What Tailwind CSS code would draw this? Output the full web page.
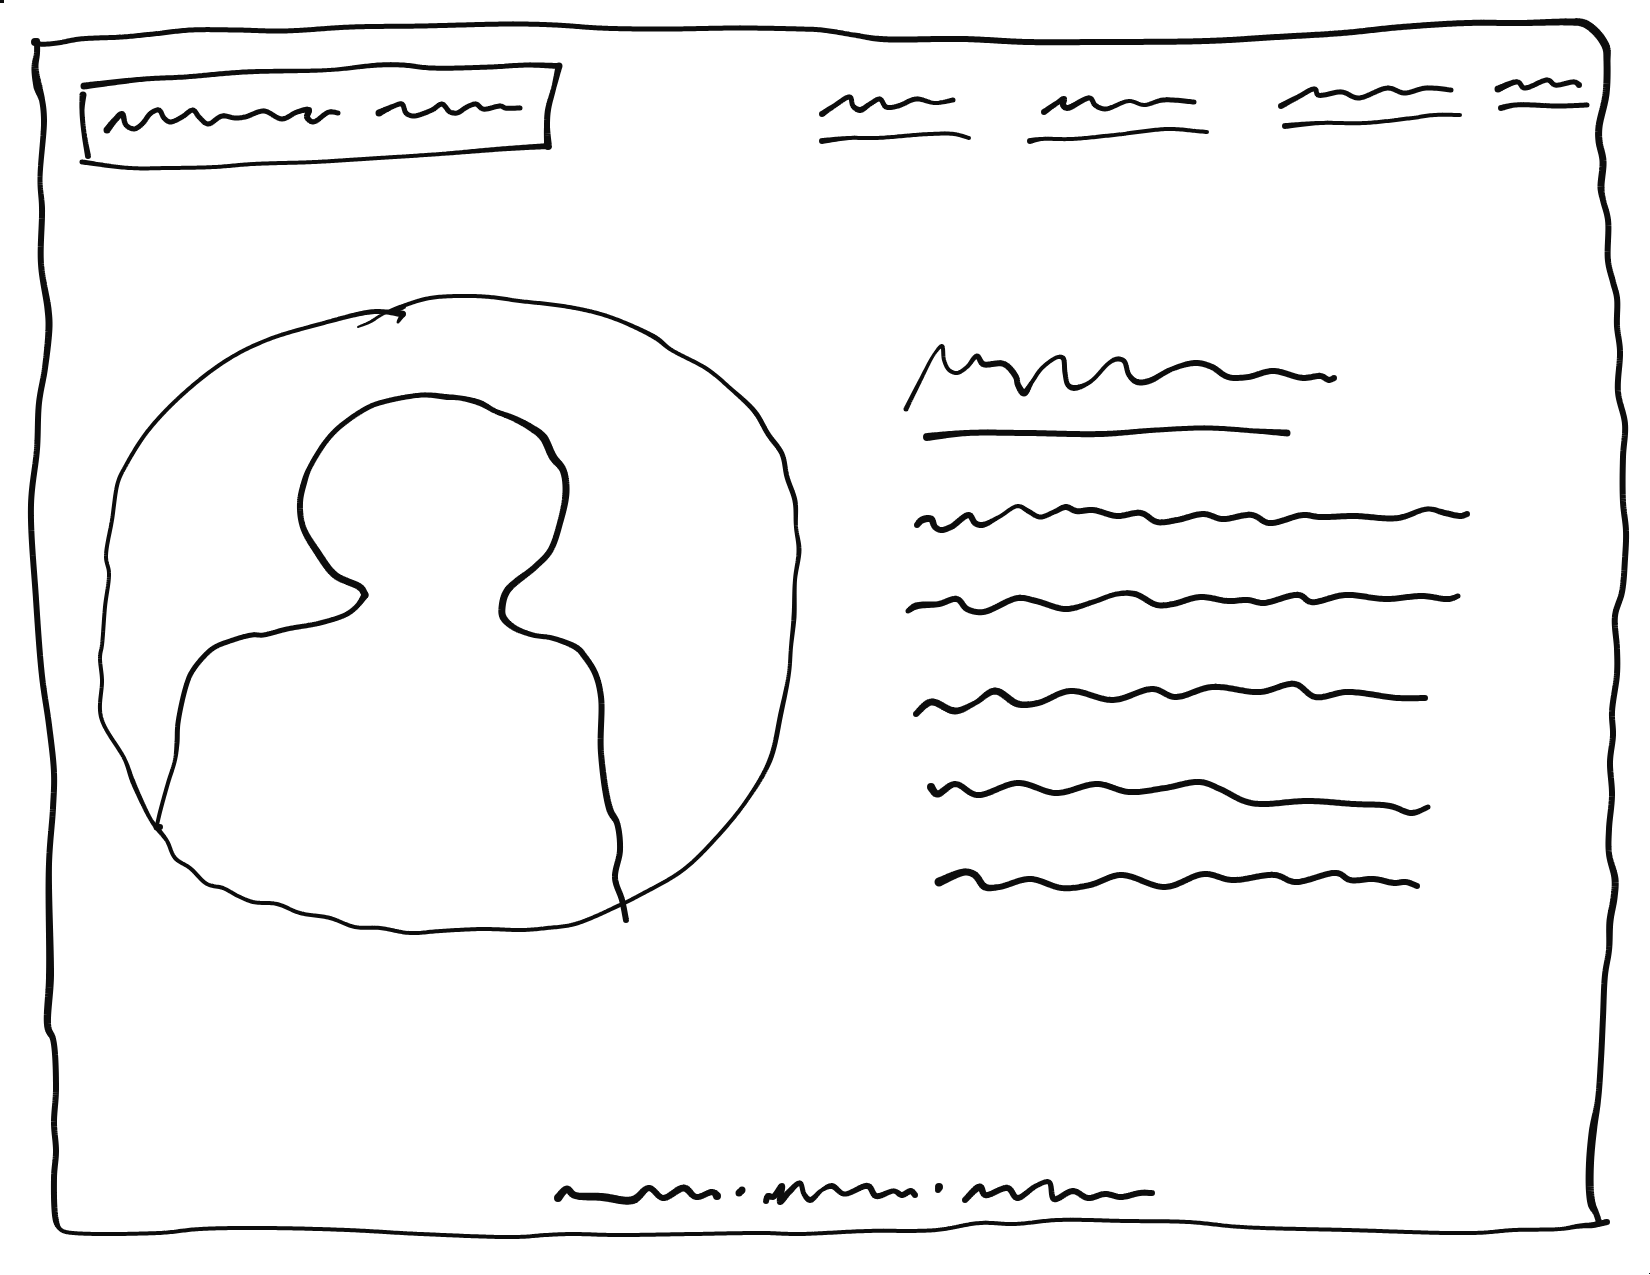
<!DOCTYPE html>
<html lang="en">
<head>
<meta charset="utf-8">
<meta name="viewport" content="width=device-width, initial-scale=1">
<title>Profile page wireframe</title>
<script src="https://cdn.jsdelivr.net/npm/@tailwindcss/browser@4"></script>
</head>
<body class="bg-white font-['Liberation_Sans',sans-serif]">
<div class="relative flex min-h-screen flex-col overflow-hidden fill-[#0d0d0d]">

  <!-- Hand-drawn page frame, stretched to the page -->
  <svg class="pointer-events-none absolute inset-0 h-full w-full" viewBox="0 0 1650 1275" preserveAspectRatio="none" aria-hidden="true">
    <rect x="0" y="0" width="4" height="3"/>
    <rect x="1649" y="1273" width="1" height="1"/>
    <path data-pen="35,42,8 40,44,5 57,43 80,39 122,37 153,34 191,30 237,30 283,31 352,27 421,26 513,24 555,25 600,28 640,29 673,29 740,28 800,29 822,30 854,35 881,39,6 963,39 1028,42 1098,42 1206,41 1277,37 1342,33 1402,27 1467,23 1521,23 1570,22,7 1583,23,8 1595,31 1606,47 1607,61,7 1606,94 1599,127 1599,141 1603,161 1601,188 1603,200,6 1608,220 1608,261 1613,282 1617,298 1617,326 1620,351 1618,392 1625,424 1623,457 1623,502 1626,531 1625,559 1622,592 1615,616 1617,649 1617,674 1612,712 1613,735 1610,762 1612,795 1609,829 1609,854 1615,879,7 1614,898 1610,921 1609,950,6 1605,975 1603,1017 1601,1059 1598,1100 1593,1130,8 1590,1163 1590,1192 1592,1205 1596,1213,6 1599,1222"/>
    <path data-pen="37,41,6 37,53 35,67,7 38,87,9 42,100,6 44,120 40,180,5 42,208,6 41,264 48,309,7 49,327 45,368,6 39,403 37,449 31,505 36,599 42,676 49,725 54,773 53,808 49,864 50,976,8 48,1028,7 53,1039,6 56,1088 54,1123 56,1151 54,1178 56,1221 60,1229,4 66,1232,4 158,1233 200,1229 263,1228 347,1230 421,1234 516,1237 546,1235 572,1234 615,1235 693,1234 763,1233 798,1234 867,1231 936,1230 980,1223 1014,1224 1058,1220 1127,1221 1188,1222 1242,1227 1347,1230 1473,1233 1515,1230 1560,1229 1580,1226,5 1593,1225,6 1607,1222"/>
  </svg>

  <header class="flex items-start justify-between pt-[60px] pr-[60px] pl-[76px]">
    <a href="#" aria-label="Home" class="block">
      <svg class="h-[112px] w-[488px] overflow-visible" viewBox="76 60 488 112" aria-hidden="true">
        <path data-pen="84,86,7 145,79,5 184,77 245,72 329,70,4 379,65,5 402,65 432,68 490,67 528,65 559,66,6"/>
        <path data-pen="559,66,7 554,87,5 548,110,6 547,127 548,146,8"/>
        <path data-pen="548,146,6 501,149,5 440,154,4 363,159 314,162 253,164 214,167 168,168 130,168 82,162,5"/>
        <path data-pen="83,95,7 82,110,5 84,133 88,156,6"/>
        <path data-pen="107,130,7 115,120,6 122,114 126,125,5 134,129 142,124 151,113 159,110 164,118 170,122 182,117 193,110 199,117 208,124 222,116 235,118 245,117 264,111 282,119 297,112 309,110,6 307,117 313,122,5 329,112 338,113"/>
        <path data-pen="379,113,7 394,106,5 402,104 406,113 413,116 432,110 442,104 450,112 457,113 467,107 476,104 483,109 501,106 505,108 520,108"/>
      </svg>
    </a>
    <nav aria-label="Main" class="flex gap-6 pt-4">
      <a href="#" aria-label="First section" class="block">
        <svg class="h-[72px] w-[180px] overflow-visible" viewBox="816 76 180 72" aria-hidden="true">
          <path data-pen="822,114,6 834,106,5 850,97 853,106 860,110,6 870,104,5 880,99 886,107 898,106 916,99 935,103,4 953,100,5"/>
          <path data-pen="822,141,6 849,138,4 876,138 930,134 954,134 969,138"/>
        </svg>
      </a>
      <a href="#" aria-label="Second section" class="block">
        <svg class="h-[72px] w-[230px] overflow-visible" viewBox="1020 76 230 72" aria-hidden="true">
          <path data-pen="1044,112,6 1057,103,5 1064,99,6 1063,105 1067,108 1090,98,5 1095,105 1105,109 1129,101,4 1144,105 1163,100,5 1194,102"/>
          <path data-pen="1030,141,6 1041,139,4 1071,139 1114,135 1168,129 1196,131 1207,132"/>
        </svg>
      </a>
      <a href="#" aria-label="Third section" class="block">
        <svg class="h-[72px] w-[192px] overflow-visible" viewBox="1274 76 192 72" aria-hidden="true">
          <path data-pen="1281,106,6 1298,97,5 1315,89 1318,95 1342,92 1358,98 1388,88 1404,93 1426,88 1451,90"/>
          <path data-pen="1285,126,6 1320,123,4 1364,123 1412,118 1434,115 1460,115"/>
        </svg>
      </a>
      <a href="#" aria-label="Contact" class="block">
        <svg class="h-[72px] w-[100px] overflow-visible" viewBox="1490 76 100 72" aria-hidden="true">
          <path data-pen="1498,89,7 1518,82,5 1524,88 1548,80 1555,85 1575,82 1579,85,6"/>
          <path data-pen="1501,108,6 1515,105,5 1559,106 1587,105"/>
        </svg>
      </a>
    </nav>
  </header>

  <main class="flex items-start gap-[92px] pt-[116px] pl-[96px]">
    <!-- Portrait placeholder -->
    <svg class="h-[652px] w-[712px] overflow-visible" viewBox="96 288 712 652" role="img" aria-label="Portrait">
      <path data-pen="358,327,2 370,322,3 383,314,3 400,307,4 430,298,4 470,296 490,297 520,301 563,306 597,313 623,322 656,338,5 670,349,4 707,369 730,388 755,412,5 768,434 782,454 787,477 795,501 796,527,4 799,550,5 795,580,4 794,617,5 791,647,4 789,673 781,713,5 770,760 747,800,4 717,837 683,870 640,895 620,905 575,924 547,928 523,930 483,929 440,931 410,933 380,928 355,927 330,918 300,913 277,904 253,902 238,896 223,888 207,884 190,868 175,858 167,841 157,828,5 151,820,4 133,782,5 125,760,4 101,717 102,680 100,657 102,645 105,607 109,573 106,557 112,520 118,482 125,467 147,432 183,394 227,360 267,340 320,324 370,312,5 387,312 402,314,7"/>
      <path data-pen="403,314,6 398,322,3"/>
      <path data-pen="394,311,5 404,307,4"/>
      <path data-pen="157,827,7 160,827,6"/>
      <path data-pen="157,825,4 160,812,4 168,783 175,760 177,743,5 178,723 187,683 193,670 212,649 230,641 252,635 263,635 287,629 320,623 347,614 358,605 365,595,7"/>
      <path data-pen="365,595,7 361,588,7 335,575,7 318,553 303,527,6 300,503 304,483 310,467,5 333,433 367,408 383,402 423,395 447,397,6 460,398,5 480,403,6 495,411,5 513,418,6 530,427,7 543,437,8 553,457 563,470,7 566,492 560,523,6 550,551 535,567 507,591,7 502,608 503,617 513,627,6 533,635,5 552,638 577,648,6 585,657 595,673 601,697 601,753 610,810,7 617,823,6 620,850 615,878 622,900 626,920"/>
    </svg>

    <section aria-label="About" class="flex flex-col pt-12">
      <h1 class="mb-11" aria-label="Heading">
        <svg class="h-[108px] w-[572px] overflow-visible" viewBox="900 336 572 108" aria-hidden="true">
          <path data-pen="906,409,5 919,383,4 935,353,3 942,346,4 944,360,4 949,370 957,373 967,367 977,356,5 983,364,6 1004,364 1016,377 1018,385 1024,393,7 1032,382,4 1042,368 1058,357 1063,358,5 1065,373 1068,385 1074,388,6 1090,382,4 1109,363 1117,359,5 1124,361 1129,375 1137,382,6 1149,381 1172,369,5 1196,363,6 1212,367 1228,377 1248,377 1273,371 1303,378 1321,376 1329,380 1334,378"/>
          <path data-pen="927,437,8 967,433,6 1026,433 1101,434 1157,430,5 1208,428 1256,431 1287,433,7"/>
        </svg>
      </h1>
      <div class="flex flex-col gap-[30px]">
        <svg class="h-[60px] w-[572px] overflow-visible" viewBox="900 488 572 60" aria-hidden="true">
          <path data-pen="917,525,6 922,520,7 931,519 935,527,6 941,530 951,527 969,515 975,523 982,525 999,517,4 1018,506 1028,511,5 1040,517 1054,512 1066,507,6 1076,511 1093,510 1117,516 1141,513 1157,522 1177,520 1204,514 1222,519 1252,515 1269,523 1303,515 1319,517 1354,516 1398,518 1428,509,5 1445,513,6 1461,516 1467,514"/>
        </svg>
        <svg class="h-[60px] w-[572px] overflow-visible" viewBox="900 578 572 60" aria-hidden="true">
          <path data-pen="908,611,5 916,606,7 939,604,6 957,599 967,609 983,612 1018,598 1036,601 1066,609 1093,602,5 1117,594 1135,594,6 1157,605 1173,604 1200,597 1228,601 1248,600 1263,603 1299,595 1311,602 1345,595 1386,599 1422,596 1449,599 1458,596,5"/>
        </svg>
        <svg class="h-[60px] w-[572px] overflow-visible" viewBox="900 668 572 60" aria-hidden="true">
          <path data-pen="916,714,6 931,702,7 955,711 975,703,5 995,691,7 1018,704 1038,703,6 1070,691 1113,700 1153,689 1175,697 1212,687 1260,692 1295,684 1315,697 1347,692 1398,698 1425,698"/>
        </svg>
        <svg class="h-[60px] w-[572px] overflow-visible" viewBox="900 758 572 60" aria-hidden="true">
          <path data-pen="931,787,8 937,794,7 955,784,6 977,795 1018,783 1056,793 1097,784 1129,792 1165,788 1200,782 1220,789 1244,801 1260,804 1307,801 1354,804 1390,806 1412,813 1428,807,5"/>
        </svg>
        <svg class="h-[60px] w-[572px] overflow-visible" viewBox="900 848 572 60" aria-hidden="true">
          <path data-pen="939,882,9 965,872,7 975,875 985,887 999,887,6 1030,879 1062,888 1090,885 1121,875 1165,887 1204,874 1232,880 1275,875 1295,882 1337,873 1350,880 1374,879 1394,883 1406,882 1417,886"/>
        </svg>
      </div>
    </section>
  </main>

  <footer class="mt-auto flex justify-center pb-[66px] pl-[58px]">
    <svg class="h-8 w-[612px] overflow-visible" viewBox="548 1175 612 32" role="img" aria-label="Footer">
      <path data-pen="558,1196,8 567,1187,7 574,1193 602,1195,8 633,1198 649,1186,6 663,1196 684,1186,7 696,1195,6 713,1190 717,1194,8"/>
      <path data-pen="739,1191,7 742,1188"/>
      <path data-pen="766,1199,6 768,1194 773,1195 782,1184 780,1200 789,1190 800,1181,5 804,1192 810,1198,6 822,1188,4 832,1184,6 844,1192,5 868,1184,6 876,1194 894,1189,5 902,1193,6 911,1189 915,1193"/>
      <path data-pen="938,1188,6 939,1185,8"/>
      <path data-pen="965,1198,6 980,1185,7 985,1193,6 1008,1186 1017,1196 1036,1184,5 1049,1180 1054,1197,6 1073,1189 1088,1196 1105,1192 1121,1195 1140,1191 1152,1191"/>
    </svg>
  </footer>
</div>

<script>
  // Turns each list of "x,y,width" points into a smooth pen stroke of varying width.
  // A point without a width keeps the width of the one before it.
  // Centripetal tangents keep unevenly spaced points free of overshoot.
  function tangents(p0, p1, p2, p3, k) {
    const gap = (a, b) => Math.max(Math.sqrt(Math.hypot(b[0] - a[0], b[1] - a[1])), 0.01);
    const d1 = gap(p1, p2), d0 = p0 === p1 ? d1 : gap(p0, p1), d2 = p3 === p2 ? d1 : gap(p2, p3);
    return [
      d1 * ((p1[k] - p0[k]) / d0 - (p2[k] - p0[k]) / (d0 + d1) + (p2[k] - p1[k]) / d1),
      d1 * ((p2[k] - p1[k]) / d1 - (p3[k] - p1[k]) / (d1 + d2) + (p3[k] - p2[k]) / d2)
    ];
  }
  for (const path of document.querySelectorAll('path[data-pen]')) {
    let width = 5;
    const pts = path.dataset.pen.split(' ').map(s => {
      const [x, y, w] = s.split(',').map(Number);
      width = w || width;
      return [x, y, width];
    });
    const line = [];
    for (let i = 0; i < pts.length - 1; i++) {
      const p1 = pts[i], p2 = pts[i + 1], p0 = pts[i - 1] || p1, p3 = pts[i + 2] || p2;
      const n = Math.max(2, Math.ceil(Math.hypot(p2[0] - p1[0], p2[1] - p1[1]) / 2));
      const m = [tangents(p0, p1, p2, p3, 0), tangents(p0, p1, p2, p3, 1)];
      for (let j = 0; j < n; j++) {
        const t = j / n, t2 = t * t, t3 = t2 * t;
        const at = k => (2 * t3 - 3 * t2 + 1) * p1[k] + (t3 - 2 * t2 + t) * m[k][0] + (3 * t2 - 2 * t3) * p2[k] + (t3 - t2) * m[k][1];
        line.push([at(0), at(1), p1[2] + (p2[2] - p1[2]) * t]);
      }
    }
    line.push(pts[pts.length - 1]);
    let d = '';
    line.forEach(([x, y, w], i) => {
      const r = w / 2;
      d += `M${x - r} ${y}a${r} ${r} 0 1 0 ${w} 0a${r} ${r} 0 1 0 ${-w} 0z`;
      const next = line[i + 1];
      if (!next) return;
      const len = Math.hypot(next[0] - x, next[1] - y) || 1;
      const nx = -(next[1] - y) / len, ny = (next[0] - x) / len, q = next[2] / 2;
      d += `M${x + nx * r} ${y + ny * r}L${next[0] + nx * q} ${next[1] + ny * q}L${next[0] - nx * q} ${next[1] - ny * q}L${x - nx * r} ${y - ny * r}z`;
    });
    path.setAttribute('d', d);
  }
</script>
</body>
</html>
